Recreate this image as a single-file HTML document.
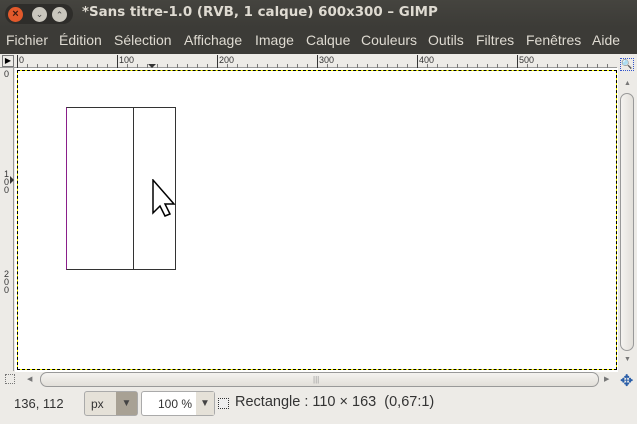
<html><head><style>
body{margin:0;width:637px;height:424px;background:#edebe7;font-family:"Liberation Sans","DejaVu Sans",sans-serif;position:relative;overflow:hidden}
div{position:absolute;box-sizing:border-box}
.t{font-size:14px;color:#dfdbd2;top:32px;white-space:nowrap}
.rl{font-size:9px;color:#333}
</style></head><body>
<div style="left:0;top:0;width:637px;height:54px;background:#3c3b37"></div>
<div style="left:0;top:0;width:637px;height:27px;background:linear-gradient(#45443f,#3c3b37)"></div>
<div style="left:5px;top:4px;width:68px;height:20px;border-radius:10px;background:#2e2d2a"></div>
<div style="left:8px;top:7px;width:15px;height:15px;border-radius:50%;background:#e2592b;color:#3a1a10;font-size:11px;text-align:center;line-height:15px;font-weight:bold">×</div>
<div style="left:32px;top:7px;width:15px;height:15px;border-radius:50%;background:#c9c6bd;color:#444;font-size:9px;text-align:center;line-height:15px">⌄</div>
<div style="left:52px;top:7px;width:15px;height:15px;border-radius:50%;background:#c9c6bd;color:#444;font-size:9px;text-align:center;line-height:16px">⌃</div>
<div style="left:82px;top:5px;font-size:13.4px;font-weight:bold;color:#dfdbd2;font-family:'DejaVu Sans',sans-serif;white-space:nowrap">*Sans titre-1.0 (RVB, 1 calque) 600x300 – GIMP</div>
<div class="t" style="left:6px">Fichier</div>
<div class="t" style="left:59px">Édition</div>
<div class="t" style="left:114px">Sélection</div>
<div class="t" style="left:184px">Affichage</div>
<div class="t" style="left:255px">Image</div>
<div class="t" style="left:306px">Calque</div>
<div class="t" style="left:361px">Couleurs</div>
<div class="t" style="left:428px">Outils</div>
<div class="t" style="left:476px">Filtres</div>
<div class="t" style="left:526px">Fenêtres</div>
<div class="t" style="left:592px">Aide</div>
<!-- rulers -->
<div style="left:0;top:54px;width:617px;height:14px;background:#edebe7;border-bottom:1px solid #999"></div>
<div style="left:2px;top:55px;width:12px;height:12px;border:1px solid #777;font-size:8px;line-height:10px;text-align:center">▶</div>
<div style="left:17px;top:56px;width:600px;height:12px;background:repeating-linear-gradient(90deg,#777 0 1px,transparent 1px 10px) bottom/600px 4px no-repeat"></div>
<div class="rl" style="left:19px;top:55px">0</div><div style="left:17px;top:55px;width:1px;height:13px;background:#333"></div>
<div class="rl" style="left:119px;top:55px">100</div><div style="left:117px;top:55px;width:1px;height:13px;background:#333"></div>
<div class="rl" style="left:219px;top:55px">200</div><div style="left:217px;top:55px;width:1px;height:13px;background:#333"></div>
<div class="rl" style="left:319px;top:55px">300</div><div style="left:317px;top:55px;width:1px;height:13px;background:#333"></div>
<div class="rl" style="left:419px;top:55px">400</div><div style="left:417px;top:55px;width:1px;height:13px;background:#333"></div>
<div class="rl" style="left:519px;top:55px">500</div><div style="left:517px;top:55px;width:1px;height:13px;background:#333"></div>
<div style="left:148px;top:64px;width:0;height:0;border-left:4px solid transparent;border-right:4px solid transparent;border-top:4px solid #333"></div>
<div style="left:0;top:68px;width:14px;height:303px;border-right:1px solid #999"></div>
<div class="rl" style="left:4px;top:69px">0</div>
<div class="rl" style="left:4px;top:170px;line-height:8px">1<br>0<br>0</div>
<div class="rl" style="left:4px;top:270px;line-height:8px">2<br>0<br>0</div>
<div style="left:10px;top:176px;border-top:4px solid transparent;border-bottom:4px solid transparent;border-left:4px solid #333"></div>
<!-- canvas -->
<div style="left:15px;top:68px;width:603px;height:304px;background:#fff"></div>
<div style="left:17px;top:70px;width:600px;height:300px;border:1px dashed #000;outline:1px solid #ff0;outline-offset:-1px"></div>
<div style="left:17px;top:70px;width:600px;height:300px;border:1px dashed #000"></div>
<div style="left:66px;top:107px;width:110px;height:163px;border:1px solid #333;border-left-color:#8a1f8a"></div>
<div style="left:133px;top:107px;width:1px;height:163px;background:#333"></div>
<svg style="position:absolute;left:152px;top:179px" width="26" height="38"><path d="M1 1 L1 34 L8 27 L13 37 L18 35 L13 25 L22 25 Z" fill="#fff" stroke="#000" stroke-width="1.5"/></svg>
<!-- vscroll -->
<div style="left:619px;top:54px;width:18px;height:318px;background:#edebe7"></div>
<div style="left:620px;top:58px;width:14px;height:13px;border:1px dotted #35c;font-size:9px;text-align:center;line-height:11px">🔍</div>
<div style="left:624px;top:80px;font-size:7px;color:#777">▲</div>
<div style="left:620px;top:93px;width:14px;height:258px;border:1px solid #999;border-radius:7px;background:linear-gradient(90deg,#f5f3f0,#e2dfd9)"></div>
<div style="left:624px;top:356px;font-size:7px;color:#777">▼</div>
<!-- hscroll -->
<div style="left:5px;top:374px;width:10px;height:10px;border:1px dotted #777"></div>
<div style="left:27px;top:375px;font-size:7px;color:#777">◀</div>
<div style="left:40px;top:372px;width:559px;height:15px;border:1px solid #999;border-radius:7px;background:linear-gradient(#f5f3f0,#e2dfd9)"></div>
<div style="left:313px;top:375px;font-size:8px;color:#999">|||</div>
<div style="left:604px;top:375px;font-size:7px;color:#777">▶</div>
<div style="left:620px;top:371px;font-size:16px;color:#2a5ea8;font-weight:bold">✥</div>
<!-- status -->
<div style="left:14px;top:396px;font-size:13px;color:#333">136, 112</div>
<div style="left:84px;top:391px;width:54px;height:25px;border:1px solid #aaa;border-radius:3px;background:#e5e1d8"></div>
<div style="left:91px;top:397px;font-size:12px;color:#333">px</div>
<div style="left:116px;top:392px;width:21px;height:23px;background:#a8a194;color:#444;font-size:10px;text-align:center;line-height:23px">▼</div>
<div style="left:141px;top:391px;width:74px;height:25px;border:1px solid #aaa;border-radius:3px;background:#fff"></div>
<div style="left:158px;top:397px;font-size:12px;color:#333">100 %</div>
<div style="left:196px;top:392px;width:18px;height:23px;background:#e5e1d8;color:#444;font-size:10px;text-align:center;line-height:23px">▼</div>
<div style="left:218px;top:398px;width:11px;height:11px;border:1px dotted #333;background:#eee"></div>
<div style="left:235px;top:394px;font-size:14.5px;color:#333;white-space:nowrap">Rectangle : 110 × 163&nbsp; (0,67:1)</div>
</body></html>
